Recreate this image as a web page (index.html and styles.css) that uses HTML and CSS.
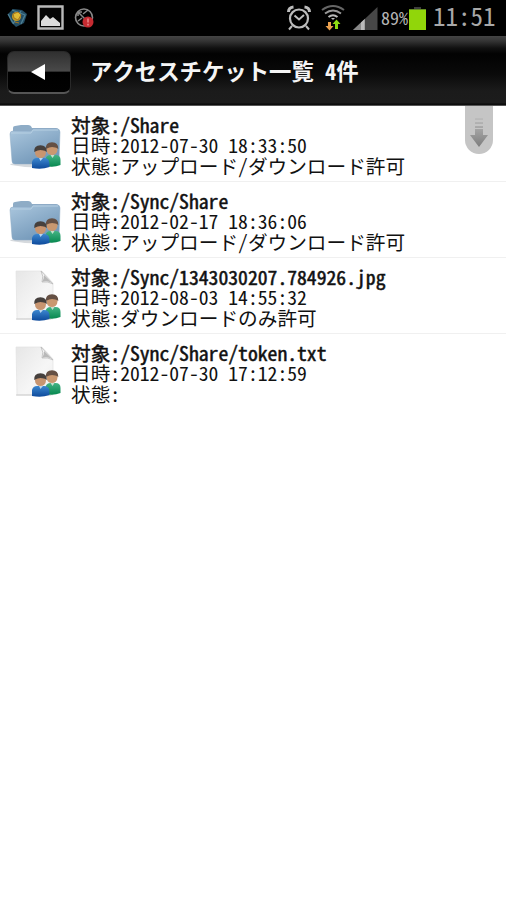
FILE: index.html
```html
<!DOCTYPE html>
<html lang="ja">
<head>
<meta charset="utf-8">
<title>アクセスチケット一覧</title>
<link rel="stylesheet" href="styles.css">
</head>
<body>
<svg class="defs" aria-hidden="true">
  <defs>
    <linearGradient id="folderFill" x1="0" y1="0" x2=".6" y2="1"><stop stop-color="#abc7de"/><stop offset="1" stop-color="#7297b8"/></linearGradient>
    <linearGradient id="pageFill" x1="0" y1="0" x2="1" y2="1"><stop stop-color="#e6e6e6"/><stop offset=".6" stop-color="#f6f6f6"/><stop offset="1" stop-color="#eeeeee"/></linearGradient>
    <linearGradient id="blueFill" x1="0" y1="0" x2="0" y2="1"><stop stop-color="#3c87cf"/><stop offset="1" stop-color="#0d499b"/></linearGradient>
    <linearGradient id="greenFill" x1="0" y1="0" x2="0" y2="1"><stop stop-color="#43b384"/><stop offset="1" stop-color="#07884f"/></linearGradient>
    <linearGradient id="arrowFill" x1="0" y1="0" x2="0" y2="1"><stop stop-color="#bcbcbc"/><stop offset="1" stop-color="#7d7d7d"/></linearGradient>
    <symbol id="people" viewBox="0 0 30 28">
      <path d="M14 25V18q1-4 5-4h5q5 0 5 5v5q-7 3-15 1z" fill="url(#greenFill)"/>
      <path d="M19 14l2 3 2-3z" fill="#c4dfcc"/>
      <circle cx="20.500" cy="8.500" r="5.500" fill="#c99870"/>
      <path d="M14.300 8q-.5-6.500 6.200-6.800 6.500 0 6.300 6.800-2-2-5-1.800-3-.5-7.500 1.800z" fill="#655044"/>
      <path d="M.5 27v-6q1-4 5-4h7q5 0 5.500 5v4q-8 3-17.500 1z" fill="url(#blueFill)"/>
      <path d="M7.500 17l1.500 3 2.500-3z" fill="#bcd6ee"/>
      <circle cx="9" cy="11.500" r="5.500" fill="#c89570"/>
      <path d="M2.700 11q-.5-6.500 6.300-6.700 6.500 0 6.300 6.700-2-2-5-1.800-3-.5-7.600 1.800z" fill="#46403d"/>
    </symbol>
    <symbol id="folder" viewBox="0 0 54 48">
      <path d="M1 40q24-4 50 0v1q-20 5-49 0z" fill="#d5d9dd"/>
      <path d="M4 7V4q0-2 2-2l6-1h7q3 0 4 3h24q3 0 3 3v6H4z" fill="#8eacc6"/>
      <path d="M1 10q0-3 3-3h17q2 0 3-2h24q3 0 3 3l-1 29q0 3-3 3H6q-3 0-3-3z" fill="url(#folderFill)" stroke="#8caac4" stroke-width=".5"/>
      <path d="M2 9h20l2-3h25" fill="none" stroke="#b6cfe2"/>
      <use href="#people" x="22" y="17" width="31" height="28"/>
    </symbol>
    <symbol id="page" viewBox="0 0 54 54">
      <path d="M7 2h26l11 12v36H8z" fill="url(#pageFill)" stroke="#e2e2e2" stroke-width=".7"/>
      <path d="M7 50h35" stroke="#ccc"/>
      <path d="M32 2q3 5 1 11 6-1 11 2z" fill="#fafafa" stroke="#b5b5b5" stroke-width=".7"/>
      <path d="M33 13q5-2 10 1l-8-8q0 4-2 7z" fill="#b9b9b9"/>
      <use href="#people" x="22" y="24" width="31" height="28"/>
    </symbol>
  </defs>
</svg>

<header class="status">
  <svg class="status-left" viewBox="0 0 110 36" width="110" height="36">
    <path d="M8 14l5-5 9 1 5 4-3 9-8 4-5-5z" fill="#244e65"/>
    <path d="M8 14l5 9m-1-13l13 5-4 9m-8 0l8-13" fill="none" stroke="#4e7f93" stroke-width="1.300"/>
    <circle cx="16.500" cy="16.500" r="4.500" fill="#c39b21"/>
    <path d="M13 14l5-2 3 3-3 5-4-2zM15 22l4 1" fill="#e0bb36" stroke="#a77620"/>
    <path d="M38.500 6.500h24v22h-24z" fill="#050505" stroke="#b9b9b9" stroke-width="2.400"/>
    <path d="M41 26v-5l5-6 4 4 3-2 7 6v3z" fill="#ddd"/>
    <circle cx="84" cy="17.500" r="8.500" fill="none" stroke="#888" stroke-width="1.600"/>
    <path d="M78 12l8 8m-8-8v4m0-4h4m1 2l5-4m-10 11l4-3" stroke="#888" stroke-width="1.500" fill="none"/>
    <circle cx="88" cy="22" r="5.500" fill="#c52b31"/>
    <path d="M88 18.500v4m0 1.200v1.800" stroke="#e98b8b" stroke-width="1.500"/>
  </svg>
  <div class="status-right">
    <svg viewBox="0 0 96 36" width="96" height="36">
      <g fill="none" stroke="#bcbcbc" stroke-width="2">
        <circle cx="14" cy="18.500" r="9" stroke-width="2.200"/>
        <path d="M9.500 15.500l4.500 4 5-4.500M7 26l-3 3.500M21 26l3 3.500"/>
        <path d="M3.500 12q0-4.500 5-5M19.500 7q5 .5 5 5" stroke-width="3"/>
      </g>
      <g fill="none" stroke="#666" stroke-width="2">
        <path d="M37 10q11-8 22 0"/><path d="M40 13.500q8-6 16 0" stroke="#999"/><path d="M43.500 17q4.500-3.500 9 0" stroke="#bbb"/>
      </g>
      <path d="M46 18h4l-2 2z" fill="#bbb"/>
      <path d="M43 22h3v4h2.500L44.500 30.500 40.500 26H43z" fill="#eba04e"/>
      <path d="M50 29v-5h-2.500l4-4.500 4 4.500H53v5z" fill="#8edb12"/>
      <path d="M68 30L92.500 7v23z" fill="#474747"/>
      <path d="M68 30l12-11.300V30z" fill="#888"/><path d="M76 30v-7.500l3.500-3.300V30z" fill="#bbb"/>
    </svg>
    <span class="pct">89%</span>
    <span class="battery"></span>
    <span class="clock">11:51</span>
  </div>
</header>

<div class="bar">
  <button class="back" aria-label="戻る"><svg viewBox="0 0 14 16" width="14" height="16"><path d="M0 8L14 0v16z" fill="#fff"/></svg></button>
  <h1>アクセスチケット一覧 4件</h1>
</div>

<main class="list">
  <div class="pull"><svg viewBox="0 0 18 30" width="18" height="30"><path d="M5 0h8v2H5zm0 4h8v2H5zm0 4h8v2H5zm0 3h8v6h5L9 29 0 17h5z" fill="url(#arrowFill)"/></svg></div>
  <article class="row">
    <svg class="icon folder"><use href="#folder"/></svg>
    <div class="text">
      <p class="target">対象:/Share</p>
      <p>日時:2012-07-30 18:33:50</p>
      <p>状態:アップロード/ダウンロード許可</p>
    </div>
  </article>
  <article class="row">
    <svg class="icon folder"><use href="#folder"/></svg>
    <div class="text">
      <p class="target">対象:/Sync/Share</p>
      <p>日時:2012-02-17 18:36:06</p>
      <p>状態:アップロード/ダウンロード許可</p>
    </div>
  </article>
  <article class="row">
    <svg class="icon page"><use href="#page"/></svg>
    <div class="text">
      <p class="target">対象:/Sync/1343030207.784926.jpg</p>
      <p>日時:2012-08-03 14:55:32</p>
      <p>状態:ダウンロードのみ許可</p>
    </div>
  </article>
  <article class="row">
    <svg class="icon page"><use href="#page"/></svg>
    <div class="text">
      <p class="target">対象:/Sync/Share/token.txt</p>
      <p>日時:2012-07-30 17:12:59</p>
      <p>状態:</p>
    </div>
  </article>
</main>
</body>
</html>
```
FILE: styles.css
```css
* { box-sizing: border-box; }

/* "hwid" sets Latin letters and digits in half-width cells. */
body {
  margin: 0;
  width: 506px;
  height: 900px;
  overflow: hidden;
  background: #fff;
  color: #111;
  font-family: "Noto Sans CJK JP", sans-serif;
  font-feature-settings: "hwid" 1;
  font-kerning: none;
}

.defs { position: absolute; width: 0; height: 0; }

.status {
  display: flex;
  justify-content: space-between;
  height: 36px;
  background: #000;
}

.status svg { display: block; }

.status-right { display: flex; width: 221px; }

.pct {
  width: 29px;
  font-size: 18px;
  line-height: 34px;
  color: #b4b4b4;
}

.battery {
  width: 17px;
  height: 21px;
  margin: 9px 0 0 -1px;
  background: #91d60a;
  border-top: 1px solid #658d22;
}

.battery::before {
  content: "";
  display: block;
  width: 7px;
  height: 2px;
  margin: -3px auto 0;
  background: #3c3c3c;
}

.clock {
  width: 64px;
  margin-left: 7px;
  font-size: 25px;
  line-height: 30px;
  color: #a8a8a8;
}

.status-right > * { flex-shrink: 0; }

.bar {
  display: flex;
  align-items: flex-start;
  height: 70px;
  padding: 15px 7px 0;
  background: linear-gradient(#444 0, #343434 5px, #111 12px, #020202 18px, #0a0a0a 38px, #1b1b1b 55px, #1c1c1c 67px, #080808 68px, #111 69px, #999 70px);
}

.back {
  display: flex;
  align-items: center;
  justify-content: center;
  width: 64px;
  height: 43px;
  padding: 0 2px 0 0;
  border: 1px solid #292929;
  border-bottom: 2px solid #555;
  border-radius: 7px;
  background: linear-gradient(#303030, #494949 48%, #000 50%, #020202);
}

h1 {
  margin: 0 0 0 19px;
  color: #f5f5f5;
  font-size: 22.4px;
  line-height: 38px;
  font-weight: 700;
}

.list { position: relative; }

.row {
  display: flex;
  height: 76px;
  padding: 9px 0 0 9px;
  border-bottom: 1px solid #f0f0f0;
}

.row:last-child { border-bottom: 0; }

.icon { flex: none; width: 54px; margin-right: 8px; }
.icon.folder { height: 48px; margin-top: 9px; }
.icon.page { height: 54px; margin-top: 2px; }

p {
  margin: 0;
  height: 20.4px;
  font-size: 19.66px;
  line-height: 20.4px;
  white-space: nowrap;
}

.target { -webkit-text-stroke: .5px #111; }

.pull {
  position: absolute;
  top: 0;
  left: 465px;
  width: 28px;
  height: 48px;
  padding: 12px 5px 0;
  border-radius: 0 0 14px 14px;
  background: #c5c5c5;
}
```
